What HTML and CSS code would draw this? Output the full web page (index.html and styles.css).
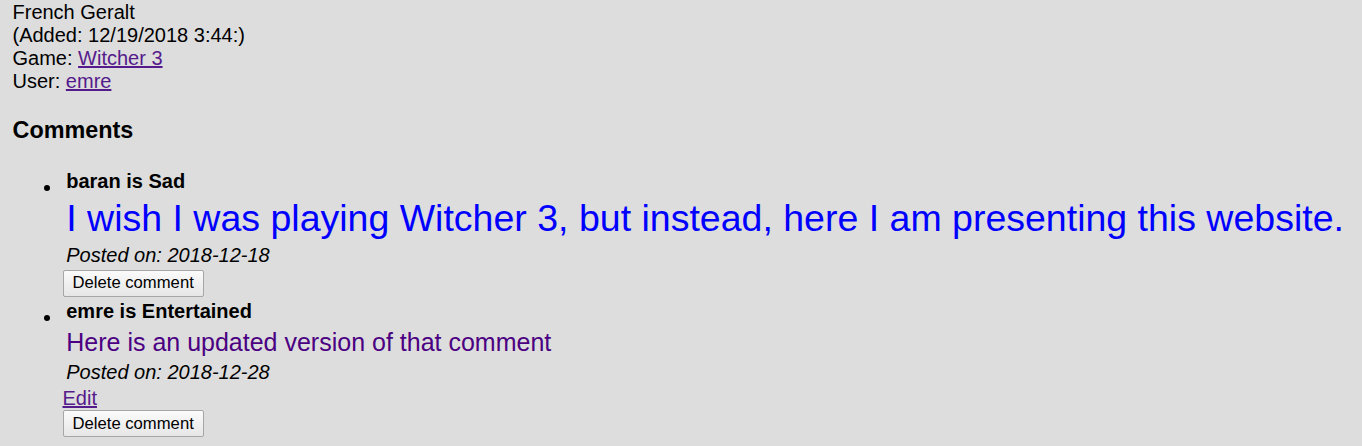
FILE: index.html
```html
<!DOCTYPE html>
<html>
<head>
<meta charset="utf-8">
<title>French Geralt</title>
<link rel="stylesheet" href="styles.css">
</head>
<body>
<div class="entry">
  <div class="line">French Geralt</div>
  <div class="line">(Added: 12/19/2018 3:44:)</div>
  <div class="line">Game: <a class="link" href="#">Witcher 3</a></div>
  <div class="line">User: <a class="link" href="#">emre</a></div>
</div>
<h3 class="heading">Comments</h3>
<ul class="comments">
  <li class="comment">
    <div class="author">baran is Sad</div>
    <div class="text text-sad">I wish I was playing Witcher 3, but instead, here I am presenting this website.</div>
    <div class="posted">Posted on: 2018-12-18</div>
    <form class="actions"><button class="btn" type="button">Delete comment</button></form>
  </li>
  <li class="comment">
    <div class="author">emre is Entertained</div>
    <div class="text text-entertained">Here is an updated version of that comment</div>
    <div class="posted">Posted on: 2018-12-28</div>
    <div class="edit"><a class="link" href="#">Edit</a></div>
    <form class="actions"><button class="btn" type="button">Delete comment</button></form>
  </li>
</ul>
</body>
</html>
```
FILE: styles.css
```css
html, body {
  background: #dddddd;
}
body {
  margin: 0;
  padding: 1px 12.5px 0;
  font-family: "Liberation Sans", Arial, sans-serif;
  font-size: 20px;
  line-height: normal;
  color: #000;
}
.link {
  color: #551a8b;
  text-decoration: underline;
}
.heading {
  font-size: 23.4px;
  font-weight: bold;
  margin: 24.4px 0 23.4px;
}
.comments {
  list-style: none;
  margin: 25.4px 0 23.4px;
  padding: 0 0 0 50px;
}
.comment {
  position: relative;
  margin-top: 3px;
}
.comment::before {
  content: "";
  position: absolute;
  left: -18.5px;
  top: 15.5px;
  width: 6px;
  height: 6px;
  border-radius: 50%;
  background: #000;
}
.author,
.text,
.posted {
  padding-left: 3.75px;
}
.author {
  font-weight: bold;
}
.text {
  margin: 4px 0;
}
.text-sad {
  font-size: 37.5px;
  color: #0000ff;
}
.text-entertained {
  font-size: 25px;
  color: #4b0082;
  margin: 5px 0 4.5px;
}
.posted {
  font-style: italic;
}
.edit {
  margin-top: 3px;
}
.actions {
  margin: 3px 0 0;
}
.edit + .actions {
  margin-top: 0;
}
.btn {
  display: block;
  font-family: "Liberation Sans", Arial, sans-serif;
  font-size: 16.67px;
  color: #000;
  padding: 2.5px 9px;
  border: 1.25px solid #a6a6a6;
  border-radius: 2px;
  background: linear-gradient(#fbfbfb, #e6e6e6);
  margin: 0;
}
```
